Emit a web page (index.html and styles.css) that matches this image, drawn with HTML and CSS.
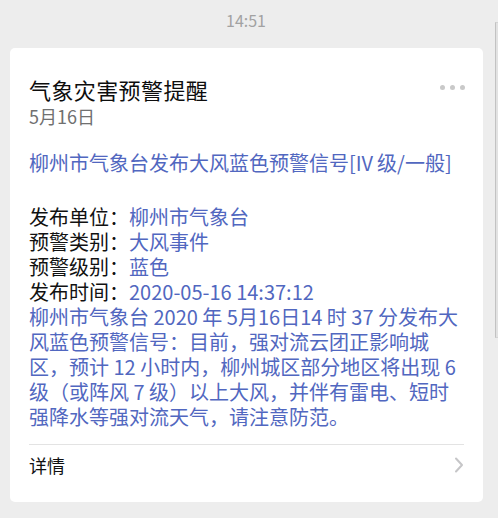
FILE: index.html
```html
<!DOCTYPE html>
<html lang="zh-CN">
<head>
  <meta charset="UTF-8">
  <meta name="viewport" content="width=device-width, initial-scale=1.0">
  <title>气象灾害预警提醒</title>
  <link rel="stylesheet" href="styles.css">
</head>
<body>
  <div class="chat">
    <div class="time">14:51</div>

    <!-- Warning card -->
    <div class="card">
      <div class="card-head">
        <div class="title">气象灾害预警提醒</div>
        <div class="more">
          <span class="dot"></span>
          <span class="dot"></span>
          <span class="dot"></span>
        </div>
      </div>
      <div class="date">5月16日</div>

      <div class="headline">柳州市气象台发布大风蓝色预警信号[IV&#8201;级/一般]</div>

      <div class="info">
        <div class="row"><span class="label">发布单位：</span><span class="value">柳州市气象台</span></div>
        <div class="row"><span class="label">预警类别：</span><span class="value">大风事件</span></div>
        <div class="row"><span class="label">预警级别：</span><span class="value">蓝色</span></div>
        <div class="row"><span class="label">发布时间：</span><span class="value">2020-05-16 14:37:12</span></div>
        <p class="desc">柳州市气象台 2020 年 5月16日14 时 37 分发布大<br>风蓝色预警信号：目前，强对流云团正影响城<br>区，预计 12 小时内，柳州城区部分地区将出现 6<br>级（或阵风 7 级）以上大风，并伴有雷电、短时<br>强降水等强对流天气，请注意防范。</p>
      </div>

      <div class="detail">
        <span>详情</span>
        <svg class="chevron" width="10" height="16" viewBox="0 0 10 16">
          <path d="M2 1.5 L8 8 L2 14.5" fill="none" stroke="#c6c6c8" stroke-width="2" stroke-linecap="round" stroke-linejoin="round"/>
        </svg>
      </div>
    </div>
  </div>

  <!-- scroll edge -->
  <div class="scroll-edge"></div>
</body>
</html>
```

FILE: styles.css
```css
* {
  margin: 0;
  padding: 0;
  box-sizing: border-box;
}

body, html {
  width: 100%;
  height: 100%;
  overflow: hidden;
}

body {
  background: #ededed;
  font-family: "Noto Sans CJK SC", "Noto Sans", sans-serif;
  color: #111;
  position: relative;
}

.chat {
  display: flex;
  flex-direction: column;
}

.time {
  height: 40px;
  line-height: 40px;
  text-align: center;
  font-size: 16px;
  color: #a2a2a2;
  margin-bottom: 8px;
  padding-right: 6px;
}

.card {
  margin: 0 15px 0 10px;
  background: #fff;
  border-radius: 5px;
  padding: 26px 19px 19px;
}

.card-head {
  display: flex;
  justify-content: space-between;
  align-items: center;
}

.title {
  font-size: 22px;
  line-height: 30px;
  letter-spacing: 0.4px;
  color: #0d0d0d;
}

.more {
  display: flex;
  gap: 5px;
  margin-right: -1px;
  margin-top: -4px;
}

.dot {
  width: 5px;
  height: 5px;
  border-radius: 50%;
  background: #c9c9c9;
}

.date {
  font-size: 18px;
  line-height: 24px;
  color: #707070;
}

.headline {
  margin-top: 22px;
  font-size: 20px;
  line-height: 25px;
  color: #5167c0;
  white-space: nowrap;
}

.info {
  margin-top: 29px;
  font-size: 20px;
  line-height: 25px;
}

.row {
  white-space: nowrap;
}

.label {
  color: #111;
}

.value {
  color: #5167c0;
}

.desc {
  color: #5167c0;
  white-space: nowrap;
}

.detail {
  margin-top: 15px;
  border-top: 1px solid #e3e3e3;
  height: 39px;
  display: flex;
  justify-content: space-between;
  align-items: center;
  font-size: 18px;
  color: #111;
  padding-top: 1px;
}

/* right edge strip */
.scroll-edge {
  position: absolute;
  right: 0;
  top: 22px;
  width: 3px;
  height: 316px;
  background: #e2e2e2;
  border-left: 1px solid #c2c2c2;
  border-top: 1px solid #d4d4d4;
  border-bottom: 1px solid #d4d4d4;
}
```
